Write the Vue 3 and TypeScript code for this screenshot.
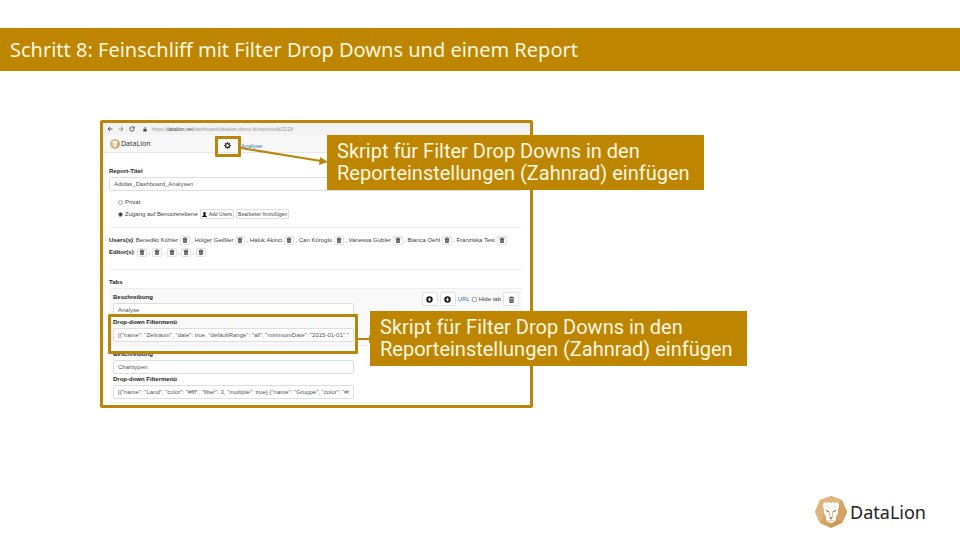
<script setup lang="ts">
import { ref } from 'vue'

interface Tab {
  id: string
  title: string
  filter: string
  actions: boolean
}

const reportTitle = ref('Adidas_Dashboard_Analysen')
const access = ref('users')
const hideTab = ref(false)
const users = ['Benedikt Köhler', 'Holger Geißler', 'Haluk Akinci', 'Can Köroglu', 'Vanessa Gubler', 'Bianca Oehl', 'Franziska Test']
const editors = [1, 2, 3, 4, 5]
const tabs = ref<Tab[]>([
  {
    id: 'analyse',
    title: 'Analyse',
    filter: '[{"name": "Zeitraum", "date": true, "defaultRange": "all", "minimumDate": "2015-01-01","maximumDate": "2018-12-31"}]',
    actions: true,
  },
  {
    id: 'charttypen',
    title: 'Charttypen',
    filter: '[{"name": "Land", "color": "#fff", "filter": 3, "multiple": true},{"name": "Gruppe", "color": "#fff"}]',
    actions: false,
  },
])
</script>

<template>
  <svg class="defs" aria-hidden="true">
    <defs>
      <linearGradient id="gold" x1="0" y1="0" x2="1" y2="1">
        <stop offset="0" stop-color="#e6c18a" />
        <stop offset="0.5" stop-color="#d7a562" />
        <stop offset="1" stop-color="#c28c49" />
      </linearGradient>
      <symbol id="lion" viewBox="0 0 32 32">
        <path d="M16 0 27 4 32 16 27 27 16 32 5 27 0 16 5 4Z" fill="url(#gold)" />
        <path d="M16 0 27 4 22 9 16 6 10 9 5 4Z" fill="#e0b680" />
        <path d="M0 16 5 4 10 9 8 20 5 27Z" fill="#dfb57b" />
        <path d="M32 16 27 27 22 23 24 12 27 4Z" fill="#d5a364" />
        <path d="M8 8 10 6 12 7 14 6 16 7 18 6 20 7 22 6 24 8 24 11 23 13 23 17 21 21 21 24 19 26 16 27 13 26 11 24 11 21 9 17 9 13 8 11Z" fill="#fff" />
        <path d="M10.500 13.500 14.500 15.500 13.500 16.500 11.500 15.500ZM21.500 13.500 17.500 15.500 18.500 16.500 20.500 15.500Z" fill="#b58242" />
        <path d="M14 21 18 21 16 23.500Z" fill="#a8783d" />
        <path d="M16 23V24.500M13 24.500 16 25 19 24.500M14.500 16V20M17.500 16V20M12 9.500 13 11M20 9.500 19 11" fill="none" stroke="#d3a66a" stroke-width="0.700" />
      </symbol>
      <symbol id="trash" viewBox="0 0 12 12">
        <path d="M4 1H8V2H11V3.500H1V2H4ZM2 4.200H10L9.400 12H2.600Z" fill="#555" />
        <path d="M4.500 5.500V10.500M6 5.500V10.500M7.500 5.500V10.500" stroke="#ccc" stroke-width="0.600" />
      </symbol>
      <symbol id="arrow-circle" viewBox="0 0 12 12">
        <circle cx="6" cy="6" r="5.500" fill="#111" />
        <path d="M6 2.500 9 6H7.300V9.200H4.700V6H3Z" fill="#fff" />
      </symbol>
    </defs>
  </svg>

  <main class="slide">
    <header class="title-bar">
      <h1>Schritt 8: Feinschliff mit Filter Drop Downs und einem Report</h1>
    </header>

    <section class="stage">
      <div class="frame">
        <div class="browser-bar">
          <svg class="nav-icon" viewBox="0 0 12 12"><path d="M11 6H2M6 2 2 6 6 10" /></svg>
          <svg class="nav-icon faded" viewBox="0 0 12 12"><path d="M1 6H10M6 2 10 6 6 10" /></svg>
          <svg class="nav-icon" viewBox="0 0 12 12"><path d="M10 3.500A4.500 4.500 0 1 0 10.500 7M10.500 1V4.500H7" /></svg>
          <svg class="lock" viewBox="0 0 10 12"><path d="M1 5H9V11H1Z" fill="#444" /><path d="M3 5V3A2 2 0 0 1 7 3V5" fill="none" stroke="#444" stroke-width="1.500" /></svg>
          <span class="url">https://<b>datalion.net</b>/dashboard/datalion-demo-fs/report/edit/2228</span>
        </div>

        <nav class="app-nav">
          <a class="brand" href="#"><svg class="brand-icon"><use href="#lion" /></svg>DataLion</a>
          <button class="gear" type="button" aria-label="Einstellungen">
            <svg viewBox="0 0 16 16">
              <circle cx="8" cy="8" r="4.500" fill="none" stroke="#333" stroke-width="3" />
              <path d="M8 0V3M8 13V16M0 8H3M13 8H16M2.500 2.500 4.500 4.500M11.500 11.500 13.500 13.500M2.500 13.500 4.500 11.500M11.500 4.500 13.500 2.500" stroke="#333" stroke-width="2.500" />
            </svg>
          </button>
          <a class="nav-link" href="#">Analyse</a>
        </nav>

        <form class="editor" @submit.prevent>
          <label class="field-label" for="report-title">Report-Titel</label>
          <input id="report-title" v-model="reportTitle" class="field" type="text">

          <div class="access">
            <label class="choice"><input v-model="access" type="radio" name="access" value="private">Privat</label>
            <div class="choice-row">
              <label class="choice"><input v-model="access" type="radio" name="access" value="users">Zugang auf Benutzerebene</label>
              <button class="small-button" type="button">
                <svg class="person" viewBox="0 0 12 12"><path d="M6 0C8 0 9 1.500 9 3.500S8 7 7.500 7.500L11.500 9.500V12H.5V9.500L4.500 7.500C4 7 3 5.500 3 3.500S4 0 6 0Z" fill="#111" /></svg>
                Add Users
              </button>
              <button class="small-button" type="button">Bearbeiter hinzufügen</button>
            </div>
          </div>

          <div class="people">
            <div class="people-row">
              <b>Users(s)</b>:
              <template v-for="(user, i) in users" :key="user">
                <span>{{ i ? ', ' : '' }}{{ user }}</span>
                <button class="remove" type="button" :aria-label="`${user} entfernen`"><svg><use href="#trash" /></svg></button>
              </template>
            </div>
            <div class="people-row">
              <b>Editor(s)</b>:
              <template v-for="n in editors" :key="n">
                <span v-if="n > 1">,</span>
                <button class="remove" type="button" aria-label="Bearbeiter entfernen"><svg><use href="#trash" /></svg></button>
              </template>
            </div>
          </div>

          <h2 class="field-label">Tabs</h2>
          <section v-for="tab in tabs" :key="tab.id" class="tab" :class="{ shaded: tab.actions }">
            <div class="tab-fields">
              <label :for="`${tab.id}-title`">Beschreibung</label>
              <input :id="`${tab.id}-title`" v-model="tab.title" class="field" type="text">
              <label :for="`${tab.id}-filter`">Drop-down Filtermenü</label>
              <input :id="`${tab.id}-filter`" v-model="tab.filter" class="field" type="text">
            </div>
            <div v-if="tab.actions" class="tab-actions">
              <button class="icon-button" type="button" aria-label="Nach oben"><svg><use href="#arrow-circle" /></svg></button>
              <button class="icon-button" type="button" aria-label="Nach unten"><svg class="down"><use href="#arrow-circle" /></svg></button>
              <a href="#">URL</a>
              <label class="choice hide"><input v-model="hideTab" type="checkbox">Hide tab</label>
              <button class="icon-button" type="button" aria-label="Tab löschen"><svg><use href="#trash" /></svg></button>
            </div>
          </section>
        </form>
      </div>

      <div class="mark mark-gear"></div>
      <div class="mark mark-filter"></div>
      <svg class="connectors" viewBox="0 0 280 230" aria-hidden="true">
        <path d="M141 28 221 41M257 219H270" fill="none" stroke="#b8860b" stroke-width="2" />
        <path d="M220 37 228 42 219 45ZM269 215 275 219 269 223Z" fill="#b8860b" />
      </svg>
      <p class="callout callout-gear">Skript für Filter Drop Downs in den<br>Reporteinstellungen (Zahnrad) einfügen</p>
      <p class="callout callout-filter">Skript für Filter Drop Downs in den<br>Reporteinstellungen (Zahnrad) einfügen</p>
    </section>

    <footer class="footer">
      <svg class="footer-icon"><use href="#lion" /></svg>
      <span>DataLion</span>
    </footer>
  </main>
</template>

<style>
body {
  margin: 0;
  background: #fff;
}
</style>

<style scoped>
* {
  box-sizing: border-box;
}

.defs {
  position: absolute;
  width: 0;
  height: 0;
}

.slide {
  display: flex;
  flex-direction: column;
  min-height: 100vh;
  padding-top: 28px;
  font-family: "Noto Sans", "Open Sans", sans-serif;
}

.title-bar {
  padding: 8px 10px;
  background: #bd8500;
  color: #fff8e2;
}

h1 {
  margin: 0;
  font-size: 20px;
  font-weight: 400;
  line-height: 27px;
}

.stage {
  position: relative;
  width: 45vw;
  min-width: 433px;
  margin: 49px 0 0 100px;
}

.frame {
  border: 3px solid #b8860b;
  border-radius: 2px;
  background: #fff;
  color: #444;
  font: 6px/12px "Liberation Sans", Arial, sans-serif;
}

.browser-bar {
  display: flex;
  align-items: center;
  gap: 5px;
  height: 12px;
  padding-left: 4px;
  background: #f3f3f3;
}

.nav-icon {
  width: 6px;
  height: 6px;
  fill: none;
  stroke: #555;
  stroke-width: 2;
}

.faded {
  opacity: 0.6;
}

.lock {
  width: 4px;
  height: 5px;
  margin-left: 3px;
}

.url {
  color: #999;
  font-size: 5px;
}

.url b {
  color: #444;
  font-weight: 400;
}

.app-nav {
  display: flex;
  align-items: center;
  height: 18px;
  padding-left: 7px;
  border-bottom: 1px solid #e7e7e7;
  background: #f8f8f8;
}

.brand {
  display: flex;
  align-items: center;
  gap: 1px;
  width: 112px;
  color: #333;
  font-family: "Noto Sans", sans-serif;
  font-size: 7px;
  text-decoration: none;
}

.brand-icon {
  width: 10px;
  height: 10px;
}

button {
  padding: 0;
  border: 0;
  background: none;
  color: inherit;
  font: inherit;
}

.gear {
  display: flex;
  width: 19px;
  padding: 4px 10px 0 2px;
}

.gear svg {
  width: 7px;
  height: 7px;
}

a {
  color: #337ab7;
  text-decoration: none;
}

.nav-link {
  padding-top: 4px;
}

.editor {
  padding: 12px 8px 0 6px;
}

.field-label {
  display: block;
  width: fit-content;
  margin: 0;
  color: #222;
  font-size: 6px;
  font-weight: 700;
  line-height: 12px;
}

.field {
  display: block;
  width: 100%;
  height: 14px;
  padding: 0 4px;
  border: 1px solid #ddd;
  border-radius: 2px;
  background: #fff;
  color: #555;
  font: inherit;
}

.access {
  padding: 5px 0 7px 9px;
  border-bottom: 1px solid #eee;
}

.choice {
  display: flex;
  align-items: center;
  gap: 2px;
}

.choice input {
  width: 5px;
  height: 5px;
  margin: 0;
  border: 1px solid #aaa;
  border-radius: 1px;
  background: #fff;
  appearance: none;
}

.choice input[type="radio"] {
  border-radius: 50%;
}

.choice input:checked {
  background: #333;
}

.choice-row {
  display: flex;
  align-items: center;
  gap: 2px;
  height: 12px;
}

.small-button {
  display: flex;
  align-items: center;
  gap: 2px;
  height: 10px;
  padding: 0 1px;
  border: 1px solid #ddd;
  border-radius: 1px;
  font-size: 5px;
  line-height: 8px;
}

.person {
  width: 5px;
  height: 5px;
}

.people {
  margin-bottom: 6px;
  padding: 6px 0 11px;
  border-bottom: 1px solid #eee;
}

.people-row {
  display: flex;
  align-items: center;
  height: 12px;
  white-space: nowrap;
}

.people-row b {
  color: #222;
}

.people-row span {
  margin-left: 1px;
}

.remove {
  display: flex;
  align-items: center;
  justify-content: center;
  width: 10px;
  height: 9px;
  margin-left: 2px;
  border: 1px solid #e4e4e4;
  border-radius: 1px;
}

.remove svg {
  width: 6px;
  height: 6px;
}

.tab {
  display: flex;
  justify-content: space-between;
  padding: 3px 3px 3px 4px;
  border-top: 1px solid #eee;
}

.tab:last-child {
  margin-bottom: 2px;
  border-bottom: 1px solid #eee;
}

.shaded {
  background: #f9f9f9;
}

.tab-fields {
  width: 241px;
  line-height: 11px;
}

.tab-fields label {
  display: block;
  color: #222;
  font-weight: 700;
}

.tab-actions {
  display: flex;
  align-items: center;
  gap: 2px;
  height: 14px;
}

.icon-button {
  display: flex;
  align-items: center;
  justify-content: center;
  width: 16px;
  height: 14px;
  border: 1px solid #e2e2e2;
  border-radius: 2px;
  background: #fff;
}

.icon-button svg {
  width: 7px;
  height: 7px;
}

.down {
  transform: rotate(180deg);
}

.mark {
  position: absolute;
  border: 3px solid #b8860b;
  border-radius: 1px;
}

.mark-gear {
  top: 16px;
  left: 115px;
  width: 26px;
  height: 21px;
}

.mark-filter {
  top: 194px;
  left: 8px;
  width: 250px;
  height: 40px;
}

.connectors {
  position: absolute;
  top: 0;
  left: 0;
  width: 280px;
  height: 230px;
}

.callout {
  position: absolute;
  width: 377px;
  margin: 0;
  padding: 5px 10px 6px;
  background: #bd8500;
  color: #fff8e2;
  font-family: Roboto, "Noto Sans", sans-serif;
  font-size: 20px;
  line-height: 22px;
  white-space: nowrap;
}

.callout-gear {
  top: 15px;
  left: 227px;
}

.callout-filter {
  top: 191px;
  left: 270px;
}

.footer {
  display: flex;
  align-items: center;
  justify-content: flex-end;
  gap: 3px;
  margin-top: auto;
  padding: 0 34px 12px 0;
  color: #222;
  font-size: 18px;
  line-height: 32px;
}

.footer-icon {
  width: 32px;
  height: 32px;
}
</style>
